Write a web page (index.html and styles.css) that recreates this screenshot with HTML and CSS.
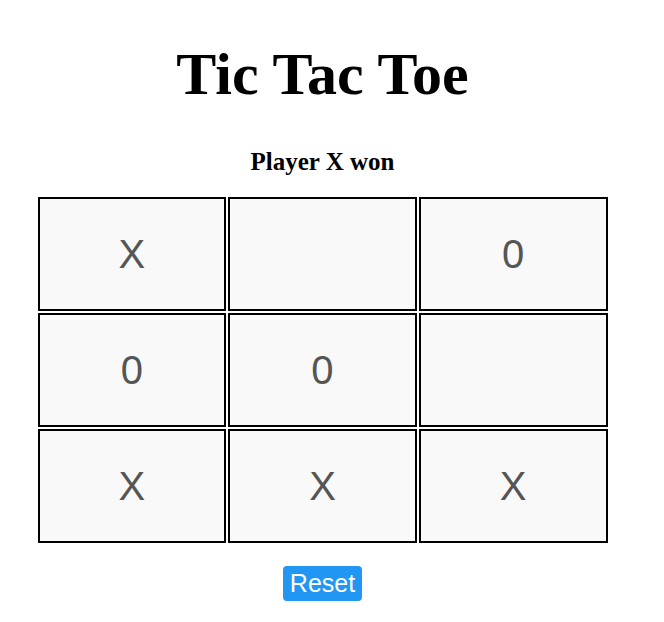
FILE: index.html
```html
<!DOCTYPE html>
<html lang="en">
<head>
<meta charset="utf-8">
<title>Tic Tac Toe</title>
<link rel="stylesheet" href="styles.css">
</head>
<body>
<div class="app">
  <h1 class="title">Tic Tac Toe</h1>
  <div class="status">Player X won</div>
  <div class="board">
    <button class="cell">X</button>
    <button class="cell"></button>
    <button class="cell">0</button>
    <button class="cell">0</button>
    <button class="cell">0</button>
    <button class="cell"></button>
    <button class="cell">X</button>
    <button class="cell">X</button>
    <button class="cell">X</button>
  </div>
  <button class="reset">Reset</button>
</div>
</body>
</html>
```

FILE: styles.css
```css
html, body {
  margin: 0;
  padding: 0;
  background: #ffffff;
}

.app {
  width: 645px;
  display: flex;
  flex-direction: column;
  align-items: center;
  font-family: "Liberation Serif", "Times New Roman", serif;
  color: #000;
}

.title {
  font-size: 60px;
  font-weight: bold;
  line-height: 1;
  margin: 44px 0 0;
}

.status {
  font-size: 25px;
  font-weight: bold;
  line-height: 1;
  margin-top: 45px;
}

.board {
  display: grid;
  grid-template-columns: repeat(3, 1fr);
  grid-auto-rows: 114px;
  gap: 2px;
  width: 570px;
  margin-top: 23px;
}

.cell {
  border: 2px solid #000;
  background: #f9f9f9;
  margin: 0;
  padding: 0;
  display: flex;
  align-items: center;
  justify-content: center;
  font-family: "Liberation Sans", Arial, sans-serif;
  font-size: 40px;
  color: #555555;
}

.reset {
  margin-top: 23px;
  height: 35px;
  padding: 0 7px;
  border: none;
  border-radius: 4px;
  background: #2196f3;
  color: #ffffff;
  font-family: "Liberation Sans", Arial, sans-serif;
  font-size: 25px;
  line-height: 35px;
}
```
